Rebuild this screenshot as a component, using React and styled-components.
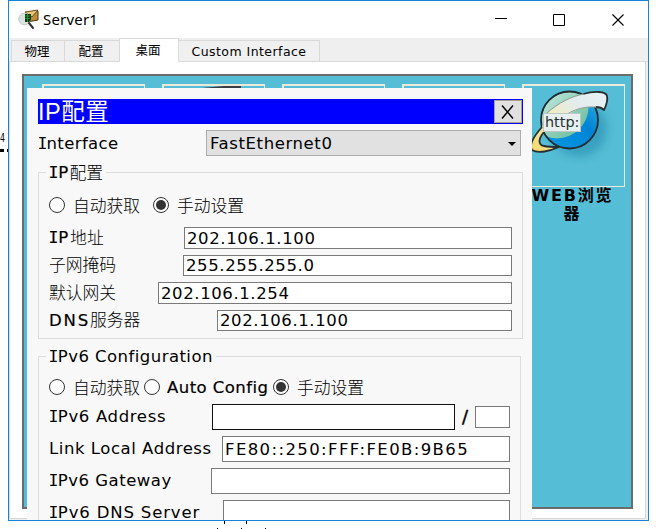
import React from 'react';
import styled, { createGlobalStyle } from 'styled-components';

const Global = createGlobalStyle`
  * { box-sizing: border-box; }
  body { margin: 0; background: #fff; color: #000; font-family: "DejaVu Sans", "Noto Sans CJK SC", sans-serif; }
`;
const Desktop = styled.div`
  position: relative; width: 657px; height: 529px; overflow: hidden; padding-left: 8px; background: #fff;
`;
const Backdrop = styled.svg`position: absolute; left: 0; top: 0;`;
const Window = styled.main`
  position: relative; width: 641px; height: 521px; border: 1px solid #1883d7; background: #fff; overflow: hidden;
`;
const TitleBar = styled.header`
  height: 37px; display: flex; align-items: center; background: #fff; padding: 0 1px 0 9px;
`;
const Title = styled.h1`
  margin: -1px auto 0 4px; font: 400 15px/20px "Noto Sans", sans-serif; letter-spacing: 0.2px;
`;
const WindowButton = styled.button`
  width: 58.5px; height: 37px; padding: 0; border: 0; background: none; display: grid; place-items: center;
  svg { display: block; }
`;
const Tabs = styled.nav`
  height: 24px; display: flex; align-items: flex-end; background: #efefef; padding-left: 2px;
  box-shadow: inset 0 -1px #d9d9d9;
`;
const Tab = styled.div`
  width: ${p => p.$w}px; height: ${p => (p.$active ? 24 : 22)}px; margin-right: -1px;
  position: relative; z-index: ${p => (p.$active ? 1 : 0)};
  border: 1px solid #d9d9d9; border-bottom-color: ${p => (p.$active ? '#fff' : '#d9d9d9')};
  background: ${p => (p.$active ? '#fff' : '#f0f0f0')};
  padding: ${p => (p.$active ? 1 : 0)}px ${p => (p.$ls ? 0 : 2)}px 0 0;
  text-align: center; font-size: 12.5px; line-height: 21px; letter-spacing: ${p => p.$ls || 0}px; white-space: nowrap;
`;
const Pane = styled.section`
  height: 458px; width: 637px; padding: 12px 0 0 13px; border: solid #d9d9d9; border-width: 0 1px 1px;
`;
const PaneBack = styled.div`
  background: #efefef; height: 458px; display: flex;
  & > section { background: #fff; height: 457px; }
`;
const Workspace = styled.div`
  width: 611px; height: 435px; border: 2px solid #6b6b6b; background: #55bdd5;
  display: flex; gap: 17px; padding: 8px 0 0 18px; margin-left: -1px;
`;
const Shortcut = styled.div`width: 103px; flex: none; text-align: center;`;
const Tile = styled.div`
  height: 103px; border: solid #ece9d8; border-width: 2px 1px 1px 2px; overflow: hidden;
  svg { display: block; }
`;
const Caption = styled.div`
  font-weight: 700; font-size: 16px; line-height: 18px; letter-spacing: 1.8px; margin: 0 -2px 0 -4px;
`;
const Dialog = styled.section`
  position: absolute; left: 18px; top: 87px; width: 505px; height: 432px; background: #f8f8f8; padding: 11px 0 0 11px;
`;
const DialogTitle = styled.div`
  width: 485px; height: 25px; padding: 1px 1px 1px 0; background: #00f; color: #fff;
  display: flex; justify-content: space-between;
  font: 400 23.5px/25px "Liberation Sans", "Noto Sans CJK SC", sans-serif; letter-spacing: 0.5px;
`;
const DialogClose = styled.button`
  width: 28px; height: 23px; padding: 0; border: 1px solid #a5a58f; background: #e1e1e1; display: grid; place-items: center;
`;
const Row = styled.div`
  display: flex; align-items: center; height: ${p => p.$h || 22}px; margin-top: ${p => p.$mt || 0}px;
`;
const Text = styled.span`
  font-size: 16.5px; letter-spacing: ${p => p.$ls ?? 0.5}px; white-space: pre; line-height: 20px;
  -webkit-text-stroke: ${p => (p.$strong ? 0.2 : 0)}px #000;
`;
const SerifI = styled.span`
  font-family: "DejaVu Sans Mono", monospace; letter-spacing: ${p => p.$ls ?? -1}px; margin-left: -0.5px;
`;
const Cjk = styled.span`
  font: 300 16.8px/20px "Noto Sans CJK SC", sans-serif; white-space: pre; margin-top: -3px;
`;
const Label = styled.label`
  flex: none; display: flex; align-items: center; width: ${p => p.$w}px; white-space: nowrap; padding-top: ${p => p.$pt || 0}px;
`;
const Select = styled.div`
  width: 315px; height: 26px; border: 1px solid #adadad; background: #e1e1e1;
  display: flex; align-items: center; justify-content: space-between; padding: 2px 4px 0 3px;
`;
const Group = styled.section`
  width: ${p => p.$w}px; height: ${p => p.$h}px; border: 1px solid #dcdcdc; padding-left: 10px; margin-top: ${p => p.$mt}px;
`;
const Legend = styled.div`
  height: 20px; width: ${p => p.$w}px; margin: -10px 0 0 -3px; padding: 0 0 0 3px; background: #f8f8f8;
  display: flex; align-items: center;
`;
const Field = styled.div`
  flex: none; width: ${p => p.$w}px; height: ${p => p.$h || 22}px; border: 1px solid ${p => p.$c || '#7a7a7a'}; background: #fff;
  display: flex; align-items: center; padding: 1px 0 0 2px; overflow: hidden;
`;
const Radio = styled.span`
  flex: none; width: 16px; height: 16px; border: 1px solid #333; border-radius: 50%; background: #fff; display: grid; place-items: center;
  margin: -2px ${p => p.$mr ?? 8}px 0 0;
  &::after { content: ""; width: 10px; height: 10px; border-radius: 50%; background: ${p => (p.$on ? '#333' : 'transparent')}; }
`;
const Slash = styled.span`width: 20px; text-align: center; font-size: 18px; line-height: 22px; -webkit-text-stroke: 0.4px #000;`;

const AppIcon = () => (
  <svg width="21" height="21" viewBox="0 0 21 21">
    <path d="M7 3 20 1v10L9 13z" fill="#be9038" />
    <path d="M7 3 20 1l-6 7z" fill="#e9c675" stroke="#49351a" strokeWidth=".8" />
    <path d="M9 13 20 11V2" fill="none" stroke="#4a3414" />
    <circle cx="6.5" cy="10" r="5.8" fill="#dce2df" stroke="#c3cac8" />
    <path d="M7 5h6v6l-2 2H7z" fill="#123811" />
    <path d="M7 7h5M7 9.5h5M9.5 5v8" stroke="#27933b" strokeWidth="1" />
    <path d="m11 14 4 5" stroke="#343434" strokeWidth="2.1" strokeLinecap="round" />
  </svg>
);

const Globe = () => (
  <svg width="100" height="100" viewBox="524 86 100 100">
    <defs>
      <linearGradient id="green" x1="0" y1="0" x2="1" y2="1"><stop stopColor="#e8f6f1" /><stop offset=".45" stopColor="#a9dccd" /><stop offset="1" stopColor="#5fb890" /></linearGradient>
      <linearGradient id="blue" x1="0" y1="1" x2="1" y2="0"><stop stopColor="#0a9be0" /><stop offset=".6" stopColor="#0083d6" /><stop offset="1" stopColor="#39b5e0" /></linearGradient>
      <linearGradient id="ribbon" x1="0" y1="1" x2="1" y2="0"><stop stopColor="#f6d866" /><stop offset=".45" stopColor="#f2ecc4" /><stop offset=".7" stopColor="#e3ecec" /><stop offset="1" stopColor="#e9f3f6" /></linearGradient>
      <filter id="soft" x="-30%" y="-30%" width="160%" height="160%"><feGaussianBlur stdDeviation="4" /></filter>
      <clipPath id="ball"><circle cx="569.5" cy="120" r="28" /></clipPath>
    </defs>
    <ellipse cx="579" cy="129" rx="28" ry="28" fill="#2489ae" opacity=".55" filter="url(#soft)" />
    <circle cx="569.5" cy="120" r="28.5" fill="url(#blue)" />
    <circle cx="557" cy="107" r="31.5" fill="url(#green)" clipPath="url(#ball)" />
    <circle cx="569.5" cy="120" r="28.5" fill="none" stroke="#222b30" strokeWidth="1.8" />
    <path d="M547 113C558 103 572 96 584 94C594 91 606 91 607 96C608 101 606 106 604 110C601 107 590 106 583 108C571 111 561 119 555 127L544 132C538 139 538 145 544 146C549 147 554 147 559 146C550 151 538 154 532 150C529 145 534 136 542 127Z" fill="url(#ribbon)" />
    <path d="M583 94C594 91 606 91 607 96C608 101 606 106 604 110C602 108 600 107 596 107M542 127C534 136 529 145 532 150C538 154 550 151 559 147C554 147 549 147 544 146C538 145 538 139 544 132" fill="none" stroke="#292e31" strokeWidth="1.8" strokeLinejoin="round" />
    <path d="M547 113C558 103 572 96 584 94M596 107C582 106 568 111 557 122" fill="none" stroke="#8c9b8f" />
    <rect x="543.5" y="113.5" width="37" height="18" fill="#e8f0ef" stroke="#bac9c5" />
    <text x="545" y="127" fontFamily="DejaVu Sans" fontSize="14.4" fill="#263136">http:</text>
  </svg>
);

const ipRows = [
  { latin: <><SerifI $ls={-0.1}>I</SerifI>P</>, cjk: '地址', w: 135, field: 328, h: 22, mt: 10, value: '202.106.1.100' },
  { latin: null, cjk: '子网掩码', w: 134, field: 329, h: 21, mt: 6, value: '255.255.255.0' },
  { latin: null, cjk: '默认网关', w: 109, field: 354, h: 22, mt: 6, value: '202.106.1.254' },
  { latin: 'DNS', cjk: '服务器', w: 168, field: 295, h: 21, mt: 6, value: '202.106.1.100' },
];

export default function App() {
  return (
    <Desktop>
      <Global />
      <Backdrop width="657" height="529">
        <text x="0" y="142" fontFamily="DejaVu Sans" fontSize="12" textLength="5" lengthAdjust="spacingAndGlyphs">4</text>
        <path d="M0 150.5h4M7 150.5h1" stroke="#000" strokeWidth="3" />
        <path d="M224.5 520v4M246.5 520v4M217.5 528v1M241.5 528v1M265.5 528v1" stroke="#000" />
      </Backdrop>
      <Window>
        <TitleBar>
          <AppIcon />
          <Title>Server1</Title>
          <WindowButton><svg width="12" height="12"><path d="M0 4.5h12" stroke="#000" /></svg></WindowButton>
          <WindowButton><svg width="12" height="12"><path d="M.5.5h11v11H.5z" fill="none" stroke="#000" /></svg></WindowButton>
          <WindowButton><svg width="12" height="12"><path d="m.5.5 11 11m0-11-11 11" stroke="#000" strokeWidth="1.1" /></svg></WindowButton>
        </TitleBar>
        <Tabs>
          <Tab $w={54}>物理</Tab>
          <Tab $w={56}>配置</Tab>
          <Tab $w={60} $active>桌面</Tab>
          <Tab $w={142} $ls={0.45}>Custom Interface</Tab>
        </Tabs>
        <PaneBack>
          <Pane>
            <Workspace>
              <Shortcut><Tile /></Shortcut>
              <Shortcut><Tile><svg width="100" height="4"><path d="M38 2 60 0h17v3H30z" fill="#3b3b43" /></svg></Tile></Shortcut>
              <Shortcut><Tile /></Shortcut>
              <Shortcut><Tile /></Shortcut>
              <Shortcut><Tile><Globe /></Tile><Caption>WEB浏览<br />器</Caption></Shortcut>
            </Workspace>
          </Pane>
        </PaneBack>
        <Dialog>
          <DialogTitle>IP配置
            <DialogClose><svg width="14" height="14"><path d="m1 .5 11 13m0-13-11 13" stroke="#000" strokeWidth="1.4" /></svg></DialogClose>
          </DialogTitle>
          <Row $h={26} $mt={6}>
            <Label $w={168} $pt={2}><Text $ls={0.4}><SerifI>I</SerifI>nterface</Text></Label>
            <Select><Text $ls={0.6}>FastEthernet0</Text><svg width="8" height="5"><path d="M0 0h8L4 4z" /></svg></Select>
          </Row>
          <Group $w={485} $h={167} $mt={16}>
            <Legend $w={60}><Text $strong $ls={1.2}><SerifI $ls={-0.1}>I</SerifI>P</Text><Cjk>配置</Cjk></Legend>
            <Row $mt={12} $h={22}>
              <Radio /><Label $w={80}><Cjk>自动获取</Cjk></Label>
              <Radio $on /><Cjk>手动设置</Cjk>
            </Row>
            {ipRows.map(r => (
              <Row key={r.cjk} $mt={r.mt} $h={r.h}>
                <Label $w={r.w}>{r.latin && <Text $strong $ls={1.8}>{r.latin}</Text>}<Cjk>{r.cjk}</Cjk></Label>
                <Field $w={r.field} $h={r.h}><Text $ls={0.6}>{r.value}</Text></Field>
              </Row>
            ))}
          </Group>
          <Group $w={483} $h={190} $mt={17}>
            <Legend $w={170}><Text $ls={0.45}><SerifI $ls={-0.6}>I</SerifI>Pv6 Configuration</Text></Legend>
            <Row $mt={10} $h={22}>
              <Radio /><Label $w={71}><Cjk>自动获取</Cjk></Label>
              <Radio $mr={7} /><Label $w={106}><Text $strong $ls={0.45}>Auto Config</Text></Label>
              <Radio $on /><Cjk>手动设置</Cjk>
            </Row>
            <Row $mt={5} $h={26}>
              <Label $w={163}><Text $ls={0.65}><SerifI $ls={-0.6}>I</SerifI>Pv6 Address</Text></Label>
              <Field $w={243} $h={26} $c="#111" /><Slash>/</Slash><Field $w={35} $h={22} />
            </Row>
            <Row $mt={6} $h={26}>
              <Label $w={173}><Text $ls={0.55}>Link Local Address</Text></Label>
              <Field $w={288} $h={26}><Text $ls={1.4}>FE80::250:FFF:FE0B:9B65</Text></Field>
            </Row>
            <Row $mt={6} $h={26}>
              <Label $w={162}><Text $ls={0.5}><SerifI $ls={-0.6}>I</SerifI>Pv6 Gateway</Text></Label><Field $w={299} $h={26} />
            </Row>
            <Row $mt={6} $h={26}>
              <Label $w={174}><Text $ls={0.85}><SerifI $ls={-0.6}>I</SerifI>Pv6 DNS Server</Text></Label><Field $w={287} $h={26} />
            </Row>
          </Group>
        </Dialog>
      </Window>
    </Desktop>
  );
}
